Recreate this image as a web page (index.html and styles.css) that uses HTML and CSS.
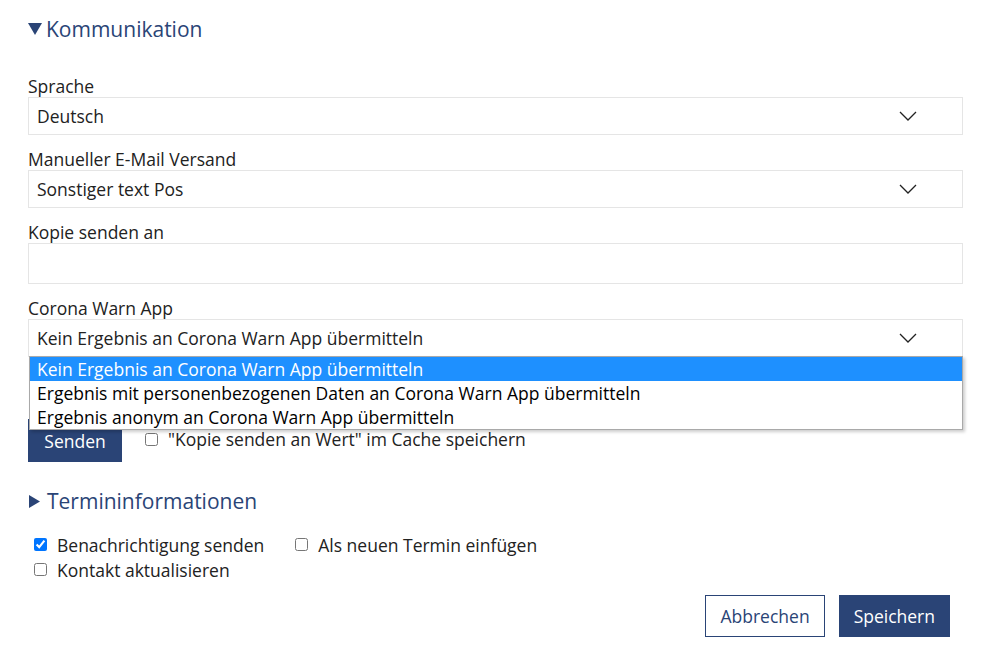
FILE: index.html
```html
<!DOCTYPE html>
<html lang="de">
<head>
    <meta charset="UTF-8">
    <meta name="viewport" content="width=device-width, initial-scale=1.0">
    <title>Kommunikation</title>
    <link rel="stylesheet" href="styles.css">
</head>
<body>
    <div class="container">
        <h2 class="section-title">
            <svg class="caret" width="14" height="12" viewBox="0 0 14 12"><polygon points="0,0 14,0 7,12" /></svg>
            Kommunikation
        </h2>

        <div class="form-group">
            <label>Sprache</label>
            <div class="select">
                <span>Deutsch</span>
                <svg class="chevron" width="18" height="10" viewBox="0 0 18 10"><polyline points="1,1 9,9 17,1" /></svg>
            </div>
        </div>

        <div class="form-group">
            <label>Manueller E-Mail Versand</label>
            <div class="select">
                <span>Sonstiger text Pos</span>
                <svg class="chevron" width="18" height="10" viewBox="0 0 18 10"><polyline points="1,1 9,9 17,1" /></svg>
            </div>
        </div>

        <div class="form-group">
            <label>Kopie senden an</label>
            <div class="input"></div>
        </div>

        <div class="form-group last">
            <label>Corona Warn App</label>
            <div class="select open">
                <span>Kein Ergebnis an Corona Warn App übermitteln</span>
                <svg class="chevron" width="18" height="10" viewBox="0 0 18 10"><polyline points="1,1 9,9 17,1" /></svg>
                <ul class="options">
                    <li class="selected">Kein Ergebnis an Corona Warn App übermitteln</li>
                    <li>Ergebnis mit personenbezogenen Daten an Corona Warn App übermitteln</li>
                    <li>Ergebnis anonym an Corona Warn App übermitteln</li>
                </ul>
            </div>
        </div>

        <div class="send-row">
            <button class="btn primary">Senden</button>
            <label class="check"><input type="checkbox"> "Kopie senden an Wert" im Cache speichern</label>
        </div>

        <h2 class="section-title collapsed">
            <svg class="caret" width="11" height="13" viewBox="0 0 11 13"><polygon points="0,0 11,6.5 0,13" /></svg>
            Termininformationen
        </h2>

        <div class="check-rows">
            <div class="check-row">
                <label class="check"><input type="checkbox" checked> Benachrichtigung senden</label>
                <label class="check"><input type="checkbox"> Als neuen Termin einfügen</label>
            </div>
            <div class="check-row">
                <label class="check"><input type="checkbox"> Kontakt aktualisieren</label>
            </div>
        </div>

        <div class="actions">
            <button class="btn outline">Abbrechen</button>
            <button class="btn primary">Speichern</button>
        </div>
    </div>
</body>
</html>
```

FILE: styles.css
```css
body {
    margin: 0;
    font-family: "Open Sans", sans-serif;
    font-size: 17.5px;
    color: #222;
    background-color: white;
}
.container {
    padding: 0 18px 0 28px;
}
.section-title {
    display: flex;
    align-items: center;
    gap: 4px;
    margin: 15px 0 32px 0;
    font-size: 21px;
    font-weight: normal;
    line-height: 28px;
    color: #2a4476;
}
.section-title.collapsed {
    gap: 7px;
    padding-left: 1px;
}
.caret {
    fill: #2a4476;
}
.form-group {
    margin-bottom: 13px;
}
.form-group.last {
    margin-bottom: 62px;
}
.form-group label {
    display: block;
    line-height: 22px;
}
.select {
    position: relative;
    display: flex;
    align-items: center;
    justify-content: space-between;
    height: 38px;
    box-sizing: border-box;
    border: 1px solid #e5e5e5;
    padding: 0 45px 0 8px;
}
.chevron {
    fill: none;
    stroke: #222;
    stroke-width: 1.3;
}
.input {
    height: 41px;
    box-sizing: border-box;
    border: 1px solid #e5e5e5;
}
.options {
    position: absolute;
    top: 100%;
    left: 0;
    right: -1px;
    margin: 0;
    padding: 0;
    list-style: none;
    background-color: white;
    border: 1px solid #a9a9a9;
    box-shadow: 2px 2px 3px rgba(0,0,0,0.2);
    z-index: 2;
}
.options li {
    height: 24px;
    line-height: 24px;
    padding-left: 7px;
    color: #000;
}
.options li.selected {
    background-color: #1e90ff;
    color: white;
}
.send-row {
    display: flex;
    align-items: center;
    gap: 20px;
}
.btn {
    font-family: "Open Sans", sans-serif;
    font-size: 17.5px;
    height: 43px;
    border: 1px solid #2a4476;
    cursor: pointer;
}
.btn.primary {
    background-color: #2a4476;
    color: white;
}
.btn.outline {
    background-color: white;
    color: #2a4476;
}
.send-row .btn {
    width: 94px;
}
.send-row .check {
    margin-top: -3px;
}
.check {
    display: flex;
    align-items: center;
    gap: 10px;
}
.check input {
    margin: 0 0 0 3px;
    width: 13px;
    height: 13px;
}
.send-row + .section-title {
    margin-top: 25px;
    margin-bottom: 17px;
}
.check-row {
    display: flex;
    gap: 28px;
    height: 25px;
    align-items: center;
    padding-left: 3px;
}
.actions {
    display: flex;
    justify-content: flex-end;
    gap: 14px;
    margin-top: 13px;
    padding-right: 13px;
}
.actions .btn {
    height: 42px;
    padding: 0 14px;
}
```
